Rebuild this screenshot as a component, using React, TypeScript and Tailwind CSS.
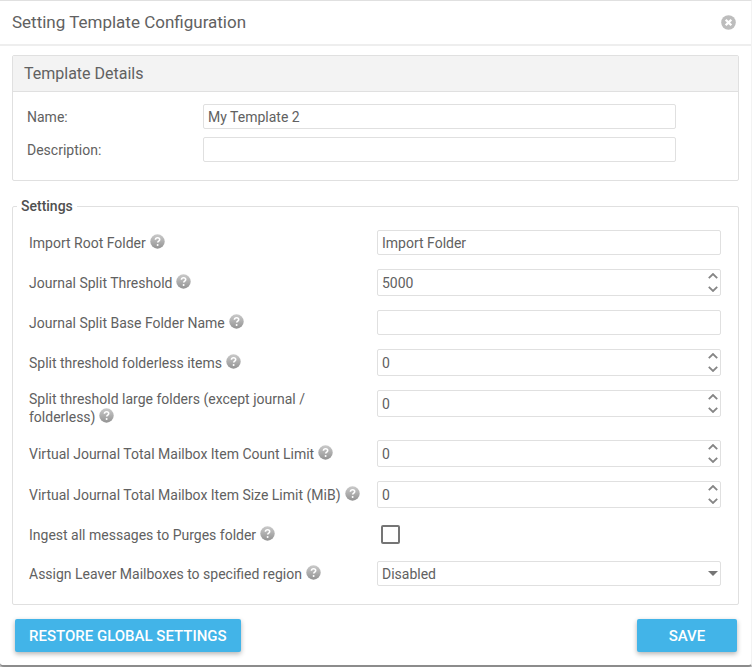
import { useState } from "react";

interface Setting {
    id: string;
    label: string;
    type: "text" | "number" | "checkbox" | "select";
    value?: string;
    options?: string[];
}

const settings: Setting[] = [
    { id: "import-root", label: "Import Root Folder", type: "text", value: "Import Folder" },
    { id: "journal-threshold", label: "Journal Split Threshold", type: "number", value: "5000" },
    { id: "journal-base", label: "Journal Split Base Folder Name", type: "text", value: "" },
    { id: "folderless", label: "Split threshold folderless items", type: "number", value: "0" },
    { id: "large-folders", label: "Split threshold large folders (except journal / folderless)", type: "number", value: "0" },
    { id: "item-count", label: "Virtual Journal Total Mailbox Item Count Limit", type: "number", value: "0" },
    { id: "item-size", label: "Virtual Journal Total Mailbox Item Size Limit (MiB)", type: "number", value: "0" },
    { id: "purges", label: "Ingest all messages to Purges folder", type: "checkbox" },
    { id: "region", label: "Assign Leaver Mailboxes to specified region", type: "select", options: ["Disabled", "Enabled"] },
];

function HelpIcon() {
    return (
        <svg viewBox="0 0 15 15" className="ml-1 inline-block size-[15px] align-[-1px]" aria-hidden="true">
            <defs>
                <linearGradient id="help-fill" x1="0" y1="0" x2="0" y2="1">
                    <stop offset="0" stopColor="#cacaca" />
                    <stop offset="1" stopColor="#939393" />
                </linearGradient>
            </defs>
            <circle cx="7.5" cy="7.5" r="7.2" fill="url(#help-fill)" />
            <path d="M5.4 5.7c.1-1.3 1-2 2.2-2s2.1.7 2.1 1.8c0 1.6-2 1.5-2 3.1" fill="none" stroke="#fff" strokeWidth="1.6" />
            <circle cx="7.6" cy="10.9" r="1" fill="#fff" />
        </svg>
    );
}

function Chevron({ down }: { down?: boolean }) {
    return (
        <svg viewBox="0 0 10 6" className="h-[6px] w-[10px]" aria-hidden="true">
            <path d={down ? "M.8 .8L5 5L9.2 .8" : "M.8 5.2L5 1L9.2 5.2"} fill="none" stroke="#858585" strokeWidth="1.8" />
        </svg>
    );
}

function NumberField({ id, initial }: { id: string; initial: number }) {
    const [value, setValue] = useState(initial);

    return (
        <div className="flex h-[27px] rounded-xs border border-[#e0e0e0] bg-white">
            <input
                id={id}
                type="number"
                value={value}
                onChange={(e) => setValue(Number(e.target.value))}
                className="min-w-0 flex-1 appearance-none px-1 outline-none [-moz-appearance:textfield] [&::-webkit-inner-spin-button]:appearance-none"
            />
            <div className="flex w-[14px] flex-col">
                <button type="button" aria-label="Increase" className="flex flex-1 items-center justify-center" onClick={() => setValue(value + 1)}>
                    <Chevron />
                </button>
                <button type="button" aria-label="Decrease" className="flex flex-1 items-center justify-center" onClick={() => setValue(Math.max(0, value - 1))}>
                    <Chevron down />
                </button>
            </div>
        </div>
    );
}

function SettingControl({ setting }: { setting: Setting }) {
    if (setting.type === "number") {
        return <NumberField id={setting.id} initial={Number(setting.value)} />;
    }
    if (setting.type === "checkbox") {
        return (
            <div className="flex h-[25px] items-center px-1">
                <input id={setting.id} type="checkbox" className="size-[19px] appearance-none rounded-xs border-2 border-[#757575] bg-white checked:bg-[#42b4e8]" />
            </div>
        );
    }
    if (setting.type === "select") {
        return (
            <div className="relative">
                <select id={setting.id} className="h-[25px] w-full appearance-none rounded-xs border border-[#e0e0e0] bg-white px-1 outline-none">
                    {setting.options?.map((option) => (
                        <option key={option}>{option}</option>
                    ))}
                </select>
                <svg viewBox="0 0 10 5" className="pointer-events-none absolute top-[10px] right-[3px] h-[5px] w-[10px]" aria-hidden="true">
                    <path d="M0 0h10L5 5z" fill="#757575" />
                </svg>
            </div>
        );
    }
    return (
        <input
            id={setting.id}
            type="text"
            defaultValue={setting.value}
            className="block h-[25px] w-full rounded-xs border border-[#e0e0e0] bg-white px-1 outline-none"
        />
    );
}

export default function App() {
    return (
        <div className="bg-[#bdbdbd] font-[Roboto,sans-serif] text-sm leading-[18px] text-[#616161]">
            <form
                className="rounded-b-sm border-t border-r border-b-2 border-t-[#e0e0e0] border-r-[#f3f3f3] border-b-[#8c8c8c] bg-white"
                onSubmit={(e) => e.preventDefault()}
            >
                <header className="flex h-[45px] items-center justify-between border-b-2 border-[#eeeeee] pr-[15px] pb-px pl-3">
                    <h1 className="text-[17px]">Setting Template Configuration</h1>
                    <button type="button" aria-label="Close">
                        <svg viewBox="0 0 15 15" className="size-[15px]" aria-hidden="true">
                            <circle cx="7.5" cy="7.5" r="7.3" fill="#bdbdbd" />
                            <path d="M4.7 4.7l5.6 5.6M10.3 4.7l-5.6 5.6" stroke="#fff" strokeWidth="2.3" />
                        </svg>
                    </button>
                </header>

                <main className="px-3 pt-[9px] pb-[13px]">
                    <section className="rounded-xs border border-[#e0e0e0]">
                        <h2 className="border-b border-[#e0e0e0] bg-[#f3f3f3] px-[11px] py-2 text-base leading-[19px]">Template Details</h2>
                        <div className="flex flex-col gap-2 pt-3 pr-[62px] pb-[18px] pl-[14px]">
                            <div className="flex items-center">
                                <label htmlFor="name" className="w-[176px] shrink-0">Name:</label>
                                <input id="name" type="text" defaultValue="My Template 2" className="h-[25px] min-w-0 flex-1 rounded-xs border border-[#e0e0e0] bg-white px-1 outline-none" />
                            </div>
                            <div className="flex items-center">
                                <label htmlFor="description" className="w-[176px] shrink-0">Description:</label>
                                <input id="description" type="text" className="h-[25px] min-w-0 flex-1 rounded-xs border border-[#e0e0e0] bg-white px-1 outline-none" />
                            </div>
                        </div>
                    </section>

                    <fieldset className="mt-4 rounded-xs border border-[#e0e0e0] pr-[17px] pb-[18px] pl-4">
                        <legend className="-ml-3 px-1 font-medium text-[#505050]">Settings</legend>
                        <div className="flex flex-col gap-[14px] pt-[15px]">
                            {settings.map((setting) => (
                                <div key={setting.id} className="flex">
                                    <label htmlFor={setting.id} className="flex w-[348px] shrink-0 items-center pr-2">
                                        <span>
                                            {setting.label}
                                            <HelpIcon />
                                        </span>
                                    </label>
                                    <div className="min-w-0 flex-1">
                                        <SettingControl setting={setting} />
                                    </div>
                                </div>
                            ))}
                        </div>
                    </fieldset>

                    <footer className="mt-[14px] flex justify-between pr-[2px] pl-[3px]">
                        <button type="button" className="h-[33px] rounded-xs bg-[#42b4e8] px-[14px] text-[15px] font-medium text-white shadow-[0_2px_5px_rgba(0,0,0,0.3)]">
                            RESTORE GLOBAL SETTINGS
                        </button>
                        <button type="submit" className="h-[33px] w-[100px] rounded-xs bg-[#42b4e8] text-[15px] font-medium text-white shadow-[0_2px_5px_rgba(0,0,0,0.3)]">
                            SAVE
                        </button>
                    </footer>
                </main>
            </form>
        </div>
    );
}
